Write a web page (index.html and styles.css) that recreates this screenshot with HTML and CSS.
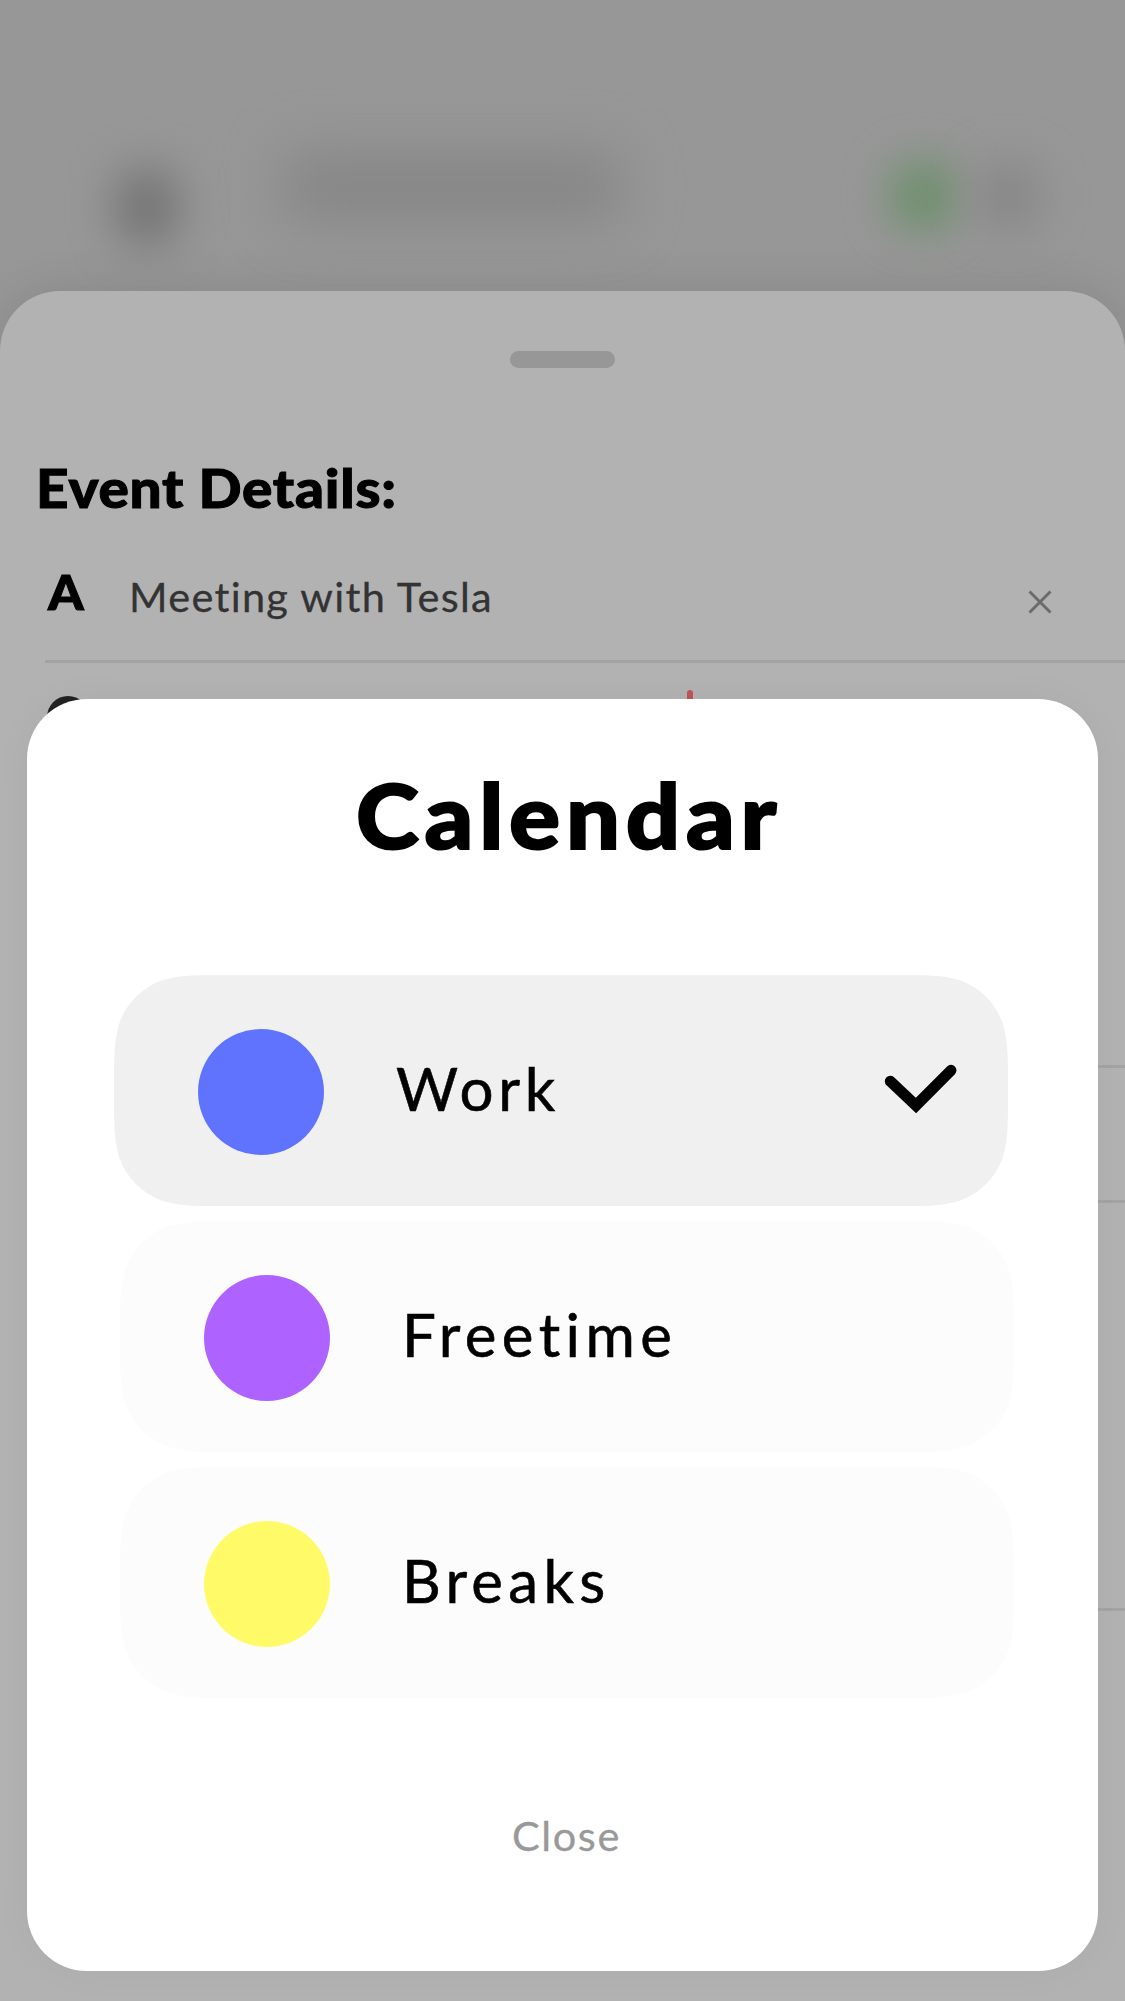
FILE: index.html
```html
<!DOCTYPE html>
<html lang="en">
<head>
<meta charset="utf-8">
<title>Calendar</title>
<link rel="stylesheet" href="styles.css">
</head>
<body>
<div class="screen">
  <header class="status">
    <span class="blob blob-icon"></span>
    <span class="blob blob-title"></span>
    <span class="blob blob-green"></span>
    <span class="blob blob-grey"></span>
  </header>
  <main class="sheet">
    <div class="handle"></div>
    <h2 class="heading"><span class="t-heading">Event Details:</span></h2>
    <div class="row row-name">
      <span class="letter"><span class="t-letter">A</span></span>
      <span class="name"><span class="t-name">Meeting with Tesla</span></span>
      <svg class="clear" viewBox="0 0 24 24"><path d="M1.5 1.5 22.5 22.5M22.5 1.5 1.5 22.5"/></svg>
    </div>
    <div class="row row-time">
      <span class="clock"></span>
      <span class="marker"></span>
    </div>
    <div class="row row-short"></div>
    <div class="row row-long"></div>
  </main>
  <section class="modal">
    <h1 class="title"><span class="t-title">Calendar</span></h1>
    <div class="options">
      <div class="option selected">
        <span class="dot blue"></span>
        <span class="label t-work">Work</span>
        <svg class="check" viewBox="0 0 74 52"><path d="M7.3 18.3 33 42.5 68 7.3"/></svg>
      </div>
      <div class="option">
        <span class="dot purple"></span>
        <span class="label t-free">Freetime</span>
      </div>
      <div class="option">
        <span class="dot yellow"></span>
        <span class="label t-breaks">Breaks</span>
      </div>
    </div>
    <div class="close"><span class="t-close">Close</span></div>
  </section>
</div>
</body>
</html>
```
FILE: styles.css
```css
* { box-sizing: border-box; }
body { margin: 0; font-family: Lato, sans-serif; color: #000; }
.screen {
  position: relative;
  width: 1125px;
  height: 2001px;
  overflow: hidden;
  background: #979797;
  display: flex;
  flex-direction: column;
}

/* blurred bar behind the sheet */
.status {
  height: 291px;
  flex: none;
  display: flex;
  align-items: flex-start;
  padding: 168px 0 0 115px;
}
.blob { flex: none; filter: blur(22px); }
.blob-icon { width: 64px; height: 78px; border-radius: 29px; background: #747474; }
.blob-title { width: 340px; height: 70px; margin: -16px 0 0 103px; border-radius: 20px; background: #868686; filter: blur(27px); }
.blob-green { width: 66px; height: 70px; margin: -7px 0 0 268px; border-radius: 31px; background: #6b8f69; }
.blob-grey { width: 60px; height: 64px; margin: -4px 0 0 22px; border-radius: 20px; background: #868686; }

.sheet {
  flex: 1;
  position: relative;
  background: #b2b2b2;
  border-radius: 60px 60px 0 0;
  box-shadow: 0 0 48px rgba(0, 0, 0, .11);
  display: flex;
  flex-direction: column;
}
.handle {
  width: 105px;
  height: 17px;
  margin: 60px auto 0;
  border-radius: 8.5px;
  background: #979797;
  flex: none;
}
.heading {
  margin: 87px 0 1px 36px;
  height: 64px;
  line-height: 64px;
  font-size: 53.5px;
  font-weight: 900;
}
.row { margin-left: 45px; border-bottom: 3px solid #a3a3a3; flex: none; display: flex; }
.row-name { height: 143px; padding-top: 40px; }
.letter { width: 84px; padding-left: 3px; font-size: 48px; line-height: 64px; font-weight: 900; }
.name { width: 900px; font-size: 41.5px; line-height: 73px; color: #333; }
.clear { width: 24px; height: 24px; margin-top: 30px; margin-left: -1px; stroke: #6b6b6b; stroke-width: 3; fill: none; }
.row-time { height: 405px; padding: 27px 0 0 2px; }
.clock { width: 42px; height: 42px; margin-top: 6px; border-radius: 50%; background: #222; }
.marker { width: 6px; height: 40px; margin-left: 598px; border-radius: 3px; background: #c05555; }
.row-short { height: 135px; }
.row-long { height: 408px; }

.modal {
  position: absolute;
  left: 27px;
  top: 699px;
  width: 1071px;
  height: 1272px;
  padding-top: 61px;
  background: #fff;
  border-radius: 60px;
  box-shadow: 0 0 45px rgba(0, 0, 0, .03);
}
.title { margin: 0 0 0 329px; height: 108px; line-height: 108px; font-size: 90px; font-weight: 900; }
.options { display: flex; flex-direction: column; gap: 15px; margin: 107px 0 0 93px; }
.option {
  width: 894px;
  height: 231px;
  display: flex;
  align-items: flex-start;
  padding: 54px 0 0 84px;
  background: #fcfcfc;
  clip-path: path("M0 114.6C0 81.6 0 65.1 5.6 47.4C12.7 28 28 12.7 47.4 5.6C65.1 0 81.6 0 114.6 0H779.4C812.4 0 828.9 0 846.6 5.6C866 12.7 881.3 28 888.4 47.4C894 65.1 894 81.6 894 114.6V116.4C894 149.4 894 165.9 888.4 183.6C881.3 203 866 218.3 846.6 225.4C828.9 231 812.4 231 779.4 231H114.6C81.6 231 65.1 231 47.4 225.4C28 218.3 12.7 203 5.6 183.6C0 165.9 0 149.4 0 116.4Z");
}
.option.selected { background: #f0f0f0; margin-left: -6px; }
.dot { width: 126px; height: 126px; border-radius: 50%; flex: none; }
.blue { background: #6073ff; }
.purple { background: #ae62ff; }
.yellow { background: #fffb68; }
.label { margin-left: 72px; width: 480px; height: 72px; margin-top: 23px; font-size: 60px; line-height: 72px; flex: none; -webkit-text-stroke: .6px #000; }
.check { width: 74px; height: 52px; margin-top: 34px; margin-left: 7px; flex: none; fill: none; stroke: #000; stroke-width: 11; stroke-linecap: round; }
.close { margin: 107px 0 0 485px; font-size: 41.5px; line-height: 60px; color: #999; }

/* heavier, wider letterforms */
.t-heading, .t-title, .t-letter { display: inline-block; transform-origin: 0 50%; transform: scaleX(1.06); }
.t-heading { letter-spacing: .7px; -webkit-text-stroke: 1px #000; }
.t-letter { -webkit-text-stroke: 1px #000; }
.t-name { letter-spacing: 1.3px; -webkit-text-stroke: .3px #333; }
.t-title { letter-spacing: 5.4px; -webkit-text-stroke: 2px #000; }
.t-work { letter-spacing: 4.7px; }
.t-free { letter-spacing: 5.4px; }
.t-breaks { letter-spacing: 5.3px; }
.t-close { letter-spacing: 1.6px; -webkit-text-stroke: .3px #999; }
```
